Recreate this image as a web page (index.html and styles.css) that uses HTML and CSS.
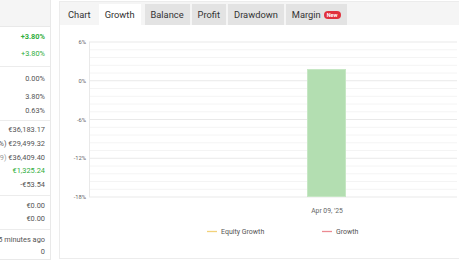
FILE: index.html
```html
<!DOCTYPE html>
<html lang="en">
<head>
  <meta charset="UTF-8" />
  <meta name="viewport" content="width=device-width, initial-scale=1.0"/>
  <title>Account</title>
  <link rel="stylesheet" href="styles.css">
</head>
<body>
  <div class="page">
    <div class="stats">
      <div class="stats-head"></div>
      <div class="group g1">
        <div class="row"><span class="val up bold">+3.80%</span></div>
        <div class="row"><span class="val up">+3.80%</span></div>
      </div>
      <div class="group g2">
        <div class="row"><span class="val">0.00%</span></div>
        <div class="row r-gap"><span class="val">3.80%</span></div>
        <div class="row"><span class="val">0.63%</span></div>
      </div>
      <div class="group g3">
        <div class="row"><span class="val">€36,183.17</span></div>
        <div class="row"><span class="val">(81.53%) €29,499.32</span></div>
        <div class="row"><span class="val"><span class="muted">(Apr 09)</span> €36,409.40</span></div>
        <div class="row"><span class="val up">€1,325.24</span></div>
        <div class="row"><span class="val">-€53.54</span></div>
      </div>
      <div class="group g4">
        <div class="row"><span class="val">€0.00</span></div>
        <div class="row"><span class="val">€0.00</span></div>
      </div>
      <div class="group g5">
        <div class="row"><span class="val">5 minutes ago</span></div>
        <div class="row"><span class="val">0</span></div>
      </div>
    </div>

    <div class="chart-panel">
      <ul class="tabs">
        <li class="plain">Chart</li>
        <li class="active">Growth</li>
        <li>Balance</li>
        <li>Profit</li>
        <li>Drawdown</li>
        <li>Margin <span class="badge">New</span></li>
      </ul>
      <svg class="chart" width="397" height="233" viewBox="0 0 397 233">
        <g stroke="#f4f4f4" stroke-width="1">
          <line x1="29" x2="397" y1="24.75" y2="24.75"/>
          <line x1="29" x2="397" y1="32.5" y2="32.5"/>
          <line x1="29" x2="397" y1="40.25" y2="40.25"/>
          <line x1="29" x2="397" y1="48" y2="48"/>
          <line x1="29" x2="397" y1="63.5" y2="63.5"/>
          <line x1="29" x2="397" y1="71.25" y2="71.25"/>
          <line x1="29" x2="397" y1="79" y2="79"/>
          <line x1="29" x2="397" y1="86.75" y2="86.75"/>
          <line x1="29" x2="397" y1="102.25" y2="102.25"/>
          <line x1="29" x2="397" y1="110" y2="110"/>
          <line x1="29" x2="397" y1="117.75" y2="117.75"/>
          <line x1="29" x2="397" y1="125.5" y2="125.5"/>
          <line x1="29" x2="397" y1="141" y2="141"/>
          <line x1="29" x2="397" y1="148.75" y2="148.75"/>
          <line x1="29" x2="397" y1="156.5" y2="156.5"/>
          <line x1="29" x2="397" y1="164.25" y2="164.25"/>
        </g>
        <g stroke="#e9e9e9" stroke-width="1">
          <line x1="29" x2="397" y1="17" y2="17"/>
          <line x1="29" x2="397" y1="55.75" y2="55.75"/>
          <line x1="29" x2="397" y1="94.5" y2="94.5"/>
          <line x1="29" x2="397" y1="133.25" y2="133.25"/>
          <line x1="29" x2="397" y1="172" y2="172"/>
          <line x1="29.5" x2="29.5" y1="17" y2="172"/>
        </g>
        <g class="axis" text-anchor="end">
          <text x="26" y="19">6%</text>
          <text x="26" y="58">0%</text>
          <text x="26" y="96.5">-6%</text>
          <text x="26" y="135">-12%</text>
          <text x="26" y="174">-18%</text>
        </g>
        <rect x="247.5" y="44.5" width="38" height="127" fill="#b3deb1" stroke="#c6e7c4"/>
        <text class="xlabel" x="267" y="188" text-anchor="middle">Apr 09, '25</text>
        <line x1="147" x2="157" y1="206.5" y2="206.5" stroke="#f2d27a" stroke-width="1.3"/>
        <text class="legend" x="161" y="209">Equity Growth</text>
        <line x1="262" x2="272" y1="206.5" y2="206.5" stroke="#ec8a92" stroke-width="1.3"/>
        <text class="legend" x="276" y="209">Growth</text>
      </svg>
    </div>
  </div>
</body>
</html>
```

FILE: styles.css
```css
body {
  margin: 0;
  background: #fff;
  font-family: Roboto, "Liberation Sans", Arial, sans-serif;
  overflow: hidden;
}
.page {
  display: flex;
  align-items: flex-start;
  gap: 8px;
  padding-top: 1px;
}

/* left info column, cut by the window edge */
.stats {
  flex: none;
  width: 52px;
  margin-left: -1px;
  margin-top: -2px;
  border: 1px solid #e9e9e9;
  box-sizing: border-box;
  height: 261px;
  overflow: hidden;
  font-size: 7.4px;
  color: #555;
}
.stats-head {
  height: 26px;
  background: #f5f5f5;
  border-bottom: 1px solid #e9e9e9;
}
.group {
  border-bottom: 1px solid #ececec;
  padding-right: 5px;
}
.group:last-child { border-bottom: none; }
.row {
  display: flex;
  justify-content: flex-end;
  align-items: center;
  white-space: nowrap;
}
.val { flex: none; }
.up { color: #2fae3c; }
.bold { font-weight: bold; }
.muted { color: #999; }

.g1 { padding-top: 1px; padding-bottom: 4px; }
.g1 .row { height: 17px; }
.g2 { padding-top: 4px; padding-bottom: 3px; }
.g2 .row { height: 14px; }
.g2 .r-gap { margin-top: 4px; }
.g3 { padding-top: 2px; padding-bottom: 3.5px; }
.g3 .row { height: 13.7px; }
.g4 { padding-top: 3.5px; padding-bottom: 4px; }
.g4 .row { height: 13px; }
.g5 { padding-top: 3px; }
.g5 .row { height: 12px; }

/* chart panel */
.chart-panel {
  flex: none;
  width: 400px;
  border: 1px solid #ececec;
  border-right: none;
  box-sizing: border-box;
  height: 258px;
  overflow: hidden;
}
.tabs {
  list-style: none;
  margin: 0;
  padding: 2px 0 0 1px;
  display: flex;
  align-items: flex-end;
  height: 23px;
  box-sizing: border-box;
  background: #f5f5f5;
}
.tabs li {
  height: 21px;
  display: flex;
  align-items: center;
  gap: 3px;
  padding: 0 6px;
  margin-right: 2px;
  background: #e3e3e3;
  font-size: 9.3px;
  color: #333;
}
.tabs li.plain {
  background: none;
  padding: 0 6px 0 7px;
}
.tabs li.active {
  background: #fff;
  margin-right: 4px;
}
.badge {
  background: #e0313d;
  color: #fff;
  font-size: 5.5px;
  font-weight: bold;
  border-radius: 4px;
  padding: 1px 3px;
}
.chart {
  display: block;
}
.axis text {
  font-size: 5.8px;
  fill: #666;
}
.xlabel {
  font-size: 6.8px;
  fill: #666;
}
.legend {
  font-size: 7px;
  fill: #555;
}
```
